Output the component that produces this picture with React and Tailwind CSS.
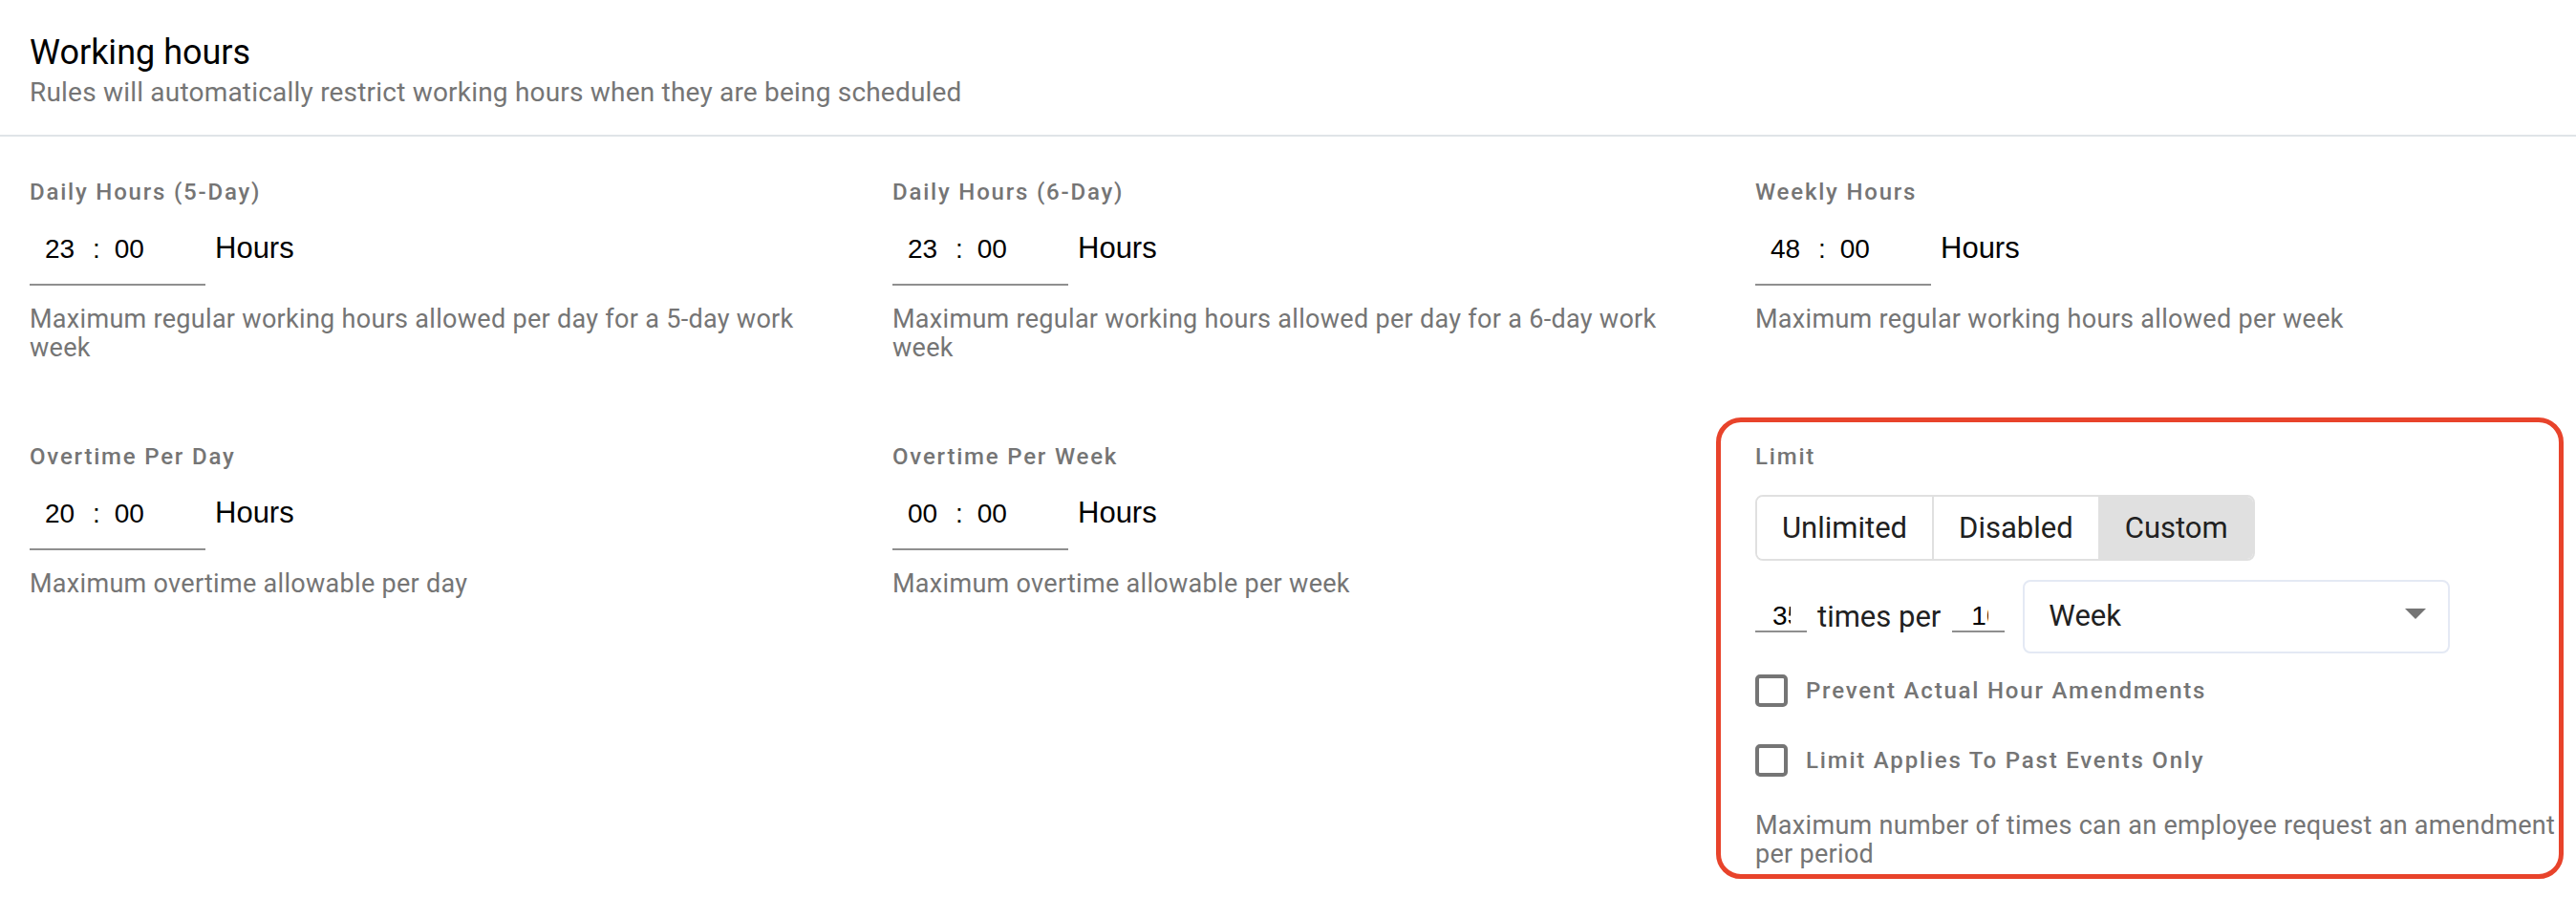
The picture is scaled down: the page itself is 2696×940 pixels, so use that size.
import { useState } from 'react'

const fields = [
  {
    label: 'Daily Hours (5-Day)',
    hours: '23',
    minutes: '00',
    help: 'Maximum regular working hours allowed per day for a 5-day work week',
  },
  {
    label: 'Daily Hours (6-Day)',
    hours: '23',
    minutes: '00',
    help: 'Maximum regular working hours allowed per day for a 6-day work week',
  },
  {
    label: 'Weekly Hours',
    hours: '48',
    minutes: '00',
    help: 'Maximum regular working hours allowed per week',
  },
  {
    label: 'Overtime Per Day',
    hours: '20',
    minutes: '00',
    help: 'Maximum overtime allowable per day',
  },
  {
    label: 'Overtime Per Week',
    hours: '00',
    minutes: '00',
    help: 'Maximum overtime allowable per week',
  },
]

function FieldLabel({ children }) {
  return (
    <div className="text-[24px] leading-[28px] font-medium tracking-[1.8px] text-[#757575]">
      {children}
    </div>
  )
}

function HelpText({ children, className = '' }) {
  return (
    <p className={`text-[27px] leading-[30px] tracking-[0.3px] text-[#757575] ${className}`}>
      {children}
    </p>
  )
}

function TimeField({ hours, minutes }) {
  return (
    <div className="mt-[29px] flex items-baseline font-['Liberation_Sans',Arial,sans-serif] text-black">
      <div className="flex w-[184px] items-baseline border-b-2 border-[#8f8f8f] pb-[20px] pl-[16px] text-[28px] leading-[32px]">
        <span className="w-[31px]">{hours}</span>
        <span className="ml-[19px]">:</span>
        <span className="ml-[15px]">{minutes}</span>
      </div>
      <span className="ml-[10px] text-[31px] leading-[32px]">Hours</span>
    </div>
  )
}

function HoursField({ field }) {
  return (
    <div>
      <FieldLabel>{field.label}</FieldLabel>
      <TimeField hours={field.hours} minutes={field.minutes} />
      <HelpText className="mt-[20px]">{field.help}</HelpText>
    </div>
  )
}

function Checkbox({ label }) {
  return (
    <label className="flex items-center">
      <span className="h-[34px] w-[34px] shrink-0 rounded-[5px] border-4 border-[#757575]" />
      <span className="ml-[19px] text-[24px] leading-[28px] font-medium tracking-[1.8px] text-[#757575]">
        {label}
      </span>
    </label>
  )
}

function LimitField() {
  const [mode, setMode] = useState('Custom')
  const modes = ['Unlimited', 'Disabled', 'Custom']

  return (
    <div className="relative">
      <FieldLabel>Limit</FieldLabel>

      <div className="mt-[26px] flex w-fit overflow-hidden rounded-[8px] border-2 border-[#e0e0e0]">
        {modes.map((m, i) => (
          <button
            key={m}
            type="button"
            onClick={() => setMode(m)}
            className={`h-[65px] px-[26px] text-[31px] leading-[65px] text-[#212121] ${
              i > 0 ? 'border-l-2 border-[#e0e0e0]' : ''
            } ${mode === m ? 'bg-[#e0e0e0]' : 'bg-white'}`}
          >
            {m}
          </button>
        ))}
      </div>

      <div className="mt-[20px] flex items-center">
        <input
          readOnly
          value="35"
          className="h-[32px] w-[54px] border-b-2 border-[#8f8f8f] pl-[18px] pr-[17px] font-['Liberation_Sans',Arial,sans-serif] text-[28px] text-black outline-none"
        />
        <span className="ml-[11px] text-[31px] leading-[36px] text-[#212121]">times per</span>
        <input
          readOnly
          value="10"
          className="ml-[12px] h-[32px] w-[55px] border-b-2 border-[#8f8f8f] pl-[20px] pr-[17px] font-['Liberation_Sans',Arial,sans-serif] text-[28px] text-black outline-none"
        />
        <div className="ml-[19px] flex h-[77px] w-[447px] items-center justify-between rounded-[8px] border-2 border-[#e4e9f4] pl-[25px] pr-[23px]">
          <span className="text-[31px] text-[#212121]">Week</span>
          <svg width="22" height="11" viewBox="0 0 22 11" className="mt-[-6px]">
            <polygon points="0,0 22,0 11,11" fill="#757575" />
          </svg>
        </div>
      </div>

      <div className="mt-[22px] flex flex-col gap-[39px]">
        <Checkbox label="Prevent Actual Hour Amendments" />
        <Checkbox label="Limit Applies To Past Events Only" />
      </div>

      <HelpText className="mt-[36px]">
        Maximum number of times can an employee request an amendment per period
      </HelpText>

      {/* highlight annotation around the limit block */}
      <div className="pointer-events-none absolute -left-[41px] -top-[27px] -right-[1px] -bottom-[11px] rounded-[26px] border-[5px] border-[#e8432b]" />
    </div>
  )
}

export default function App() {
  return (
    <div className="min-h-[940px] w-[2696px] bg-white font-['Roboto',sans-serif]">
      <div className="border-b-2 border-[#e0e4e8] pl-[31px] pt-[35px] pb-[28px]">
        <h1 className="text-[36px] leading-[40px] text-black">Working hours</h1>
        <p className="mt-[6px] text-[28px] leading-[32px] tracking-[0.2px] text-[#757575]">
          Rules will automatically restrict working hours when they are being scheduled
        </p>
      </div>

      <div className="grid grid-cols-[845px_845px_845px] gap-x-[58px] gap-y-[85px] pl-[31px] pt-[44px]">
        {fields.map((f) => (
          <HoursField key={f.label} field={f} />
        ))}
        <LimitField />
      </div>
    </div>
  )
}
